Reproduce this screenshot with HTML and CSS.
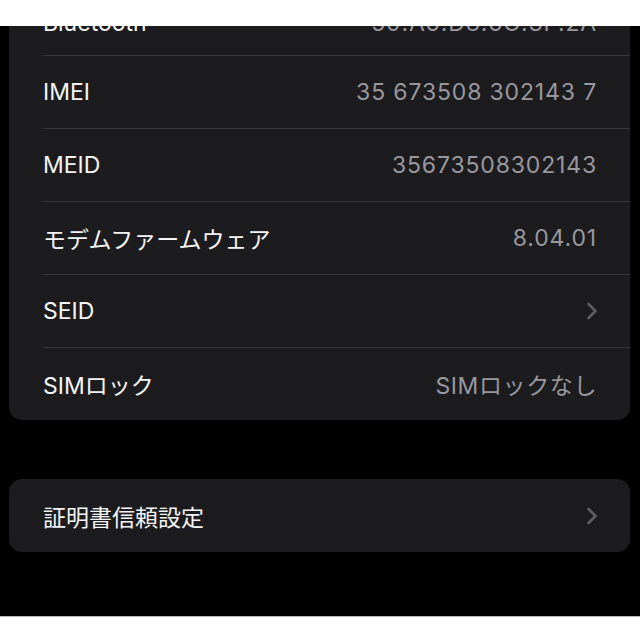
FILE: index.html
```html
<!DOCTYPE html>
<html lang="ja">
<head>
    <meta charset="UTF-8">
    <meta name="viewport" content="width=device-width, initial-scale=1.0">
    <title>情報</title>
    <link rel="stylesheet" href="styles.css">
</head>
<body>

<div class="page">
    <div class="band"></div>
    <div class="screen">
        <div class="group first">
            <div class="row partial">
                <span class="label">Bluetooth</span>
                <span class="value num">50:A6:D8:6C:3F:2A</span>
            </div>
            <div class="row">
                <span class="label">IMEI</span>
                <span class="value num">35 673508 302143 7</span>
            </div>
            <div class="row">
                <span class="label">MEID</span>
                <span class="value num">35673508302143</span>
            </div>
            <div class="row">
                <span class="label">モデムファームウェア</span>
                <span class="value num">8.04.01</span>
            </div>
            <div class="row">
                <span class="label">SEID</span>
                <svg class="chevron" width="12" height="18" viewBox="0 0 12 18"><path d="M2.5 2 L9.5 9 L2.5 16" fill="none" stroke="#5e5e63" stroke-width="2.6" stroke-linecap="round" stroke-linejoin="round"/></svg>
            </div>
            <div class="row">
                <span class="label">SIMロック</span>
                <span class="value">SIMロックなし</span>
            </div>
        </div>

        <div class="group">
            <div class="row">
                <span class="label">証明書信頼設定</span>
                <svg class="chevron" width="12" height="18" viewBox="0 0 12 18"><path d="M2.5 2 L9.5 9 L2.5 16" fill="none" stroke="#5e5e63" stroke-width="2.6" stroke-linecap="round" stroke-linejoin="round"/></svg>
            </div>
        </div>
    </div>
    <div class="band bottom"></div>
</div>

</body>
</html>
```

FILE: styles.css
```css
html, body { margin: 0; background: #fff; }
body { font-family: Inter, "Noto Sans CJK JP", sans-serif; }
.page { height: 640px; display: flex; flex-direction: column; overflow: hidden; }
.band { height: 26px; flex: none; background: #fff; }
.band.bottom { height: auto; flex: 1; border-top: 1px solid #b9b9bb; }
.screen { height: 590px; flex: none; box-sizing: border-box; background: #000; padding: 0 10px 0 9px; overflow: hidden; }
.group { background: #1c1c1e; border-radius: 13px; margin-top: 59px; }
.group.first { margin-top: -44px; }
.row { height: 73px; box-sizing: border-box; margin-left: 34px; padding-right: 33px; display: flex; align-items: center; justify-content: space-between; border-top: 1px solid #38383b; }
.row:first-child { border-top: none; }
.row.partial { padding-top: 8px; }
.label { color: #f4f4f6; font-size: 23px; }
.value { color: #98989e; font-size: 23px; letter-spacing: 0.6px; }
.value.num { letter-spacing: 0.85px; }
.chevron { display: block; margin-right: -1px; }
```
